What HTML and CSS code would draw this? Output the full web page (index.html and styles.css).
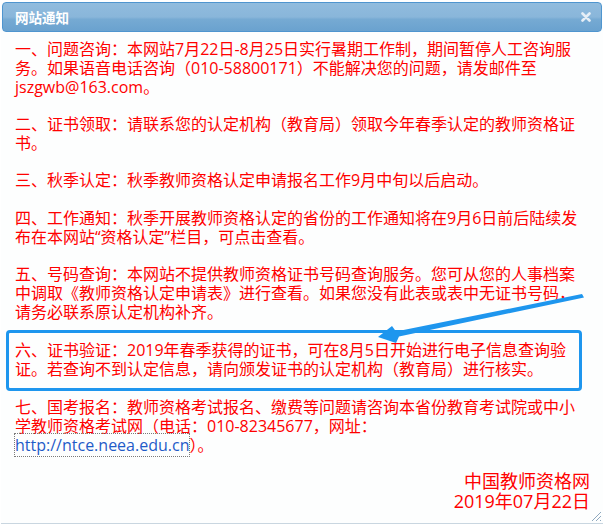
FILE: index.html
```html
<!DOCTYPE html>
<html lang="zh-CN">
<head>
<meta charset="utf-8">
<title>网站通知</title>
<link rel="stylesheet" href="styles.css">
</head>
<body>
<div class="window">
  <div class="titlebar">
    <span class="title">网站通知</span>
    <span class="close"><svg width="10" height="10" viewBox="0 0 10 10"><path d="M1.5 1.5 L8.5 8.5 M8.5 1.5 L1.5 8.5" stroke="#e6eef6" stroke-width="2.6" stroke-linecap="round"/></svg></span>
  </div>
  <div class="content">
    <p class="item">一、问题咨询：本网站7月22日-8月25日实行暑期工作制，期间暂停人工咨询服<br>务。如果语音电话咨询（010-58800171）不能解决您的问题，请发邮件至<br>jszgwb@163.com。</p>
    <p class="item">二、证书领取：请联系您的认定机构（教育局）领取今年春季认定的教师资格证<br>书。</p>
    <p class="item">三、秋季认定：秋季教师资格认定申请报名工作9月中旬以后启动。</p>
    <p class="item">四、工作通知：秋季开展教师资格认定的省份的工作通知将在9月6日前后陆续发<br>布在本网站“资格认定”栏目，可点击查看。</p>
    <p class="item">五、号码查询：本网站不提供教师资格证书号码查询服务。您可从您的人事档案<br>中调取《教师资格认定申请表》进行查看。如果您没有此表或表中无证书号码，<br>请务必联系原认定机构补齐。</p>
    <div class="highlight">
      <p class="inner">六、证书验证：2019年春季获得的证书，可在8月5日开始进行电子信息查询验<br>证。若查询不到认定信息，请向颁发证书的认定机构（教育局）进行核实。</p>
    </div>
    <p class="item after-box">七、国考报名：教师资格考试报名、缴费等问题请咨询本省份教育考试院或中小<br>学教师资格考试网（电话：010-82345677，网址：<br><a class="link" href="#">http://ntce.neea.edu.cn</a>）。</p>
    <p class="item sign">中国教师资格网<br>2019年07月22日</p>
  </div>
</div>
<svg class="grip" width="12" height="12" viewBox="0 0 12 12"><path d="M11 2 L2 11 M11 6 L6 11 M11 10 L10 11" stroke="#8fa9bf" stroke-width="1"/></svg>
<svg class="arrow" width="604" height="526" viewBox="0 0 604 526"><polygon points="378,337 392,326 396,331.5 582,294 584,297.5 399,336.5 396,343" fill="#1e96ee"/></svg>
</body>
</html>
```

FILE: styles.css
```css
html, body {
  margin: 0;
  padding: 0;
  background: #ffffff;
}

body {
  position: relative;
  width: 604px;
  height: 526px;
  overflow: hidden;
  font-family: "Open Sans", "Noto Sans CJK SC", sans-serif;
}

.window {
  width: 602px;
  height: 521px;
  margin-left: 1px;
  border-bottom: 1px solid #c9d6e0;
  background: #fdfefe;
}

.titlebar {
  margin: 2px 1px 0 1px;
  height: 28px;
  border: 1px solid #4f95cf;
  border-radius: 4px;
  background: linear-gradient(to bottom, #91bcde 0%, #89b6da 50%, #76aad3 58%, #6aa2cf 100%);
  display: flex;
  align-items: center;
  justify-content: space-between;
  padding: 0 10px 0 12px;
}

.title {
  font-family: "Noto Sans CJK SC", sans-serif;
  font-size: 13.5px;
  font-weight: bold;
  color: #ffffff;
  line-height: 16px;
}

.close {
  display: flex;
  width: 10px;
  height: 10px;
}

.content {
  padding: 7.5px 13px 0 14px;
  color: #ff0000;
  font-size: 16px;
  line-height: 19px;
}

.item {
  margin: 18.4px 0 0 0;
}

.item:first-child {
  margin-top: 0;
}

.inner {
  margin: 0;
}

.highlight {
  margin: 7.5px 8px 0 -9px;
  padding: 8.5px 6px 9px 6px;
  border: 3px solid #1e96ee;
  border-radius: 4px;
}

.item.after-box {
  margin-top: 6.5px;
}

.link {
  color: #1f5bc8;
  text-decoration: none;
  outline: 1px dotted #7a7a7a;
}

.item.sign {
  margin-top: 16.5px;
  text-align: right;
  font-size: 18px;
  line-height: 20px;
}

.grip {
  position: absolute;
  left: 590px;
  top: 510px;
}

.arrow {
  position: absolute;
  left: 0;
  top: 0;
  pointer-events: none;
}
```
